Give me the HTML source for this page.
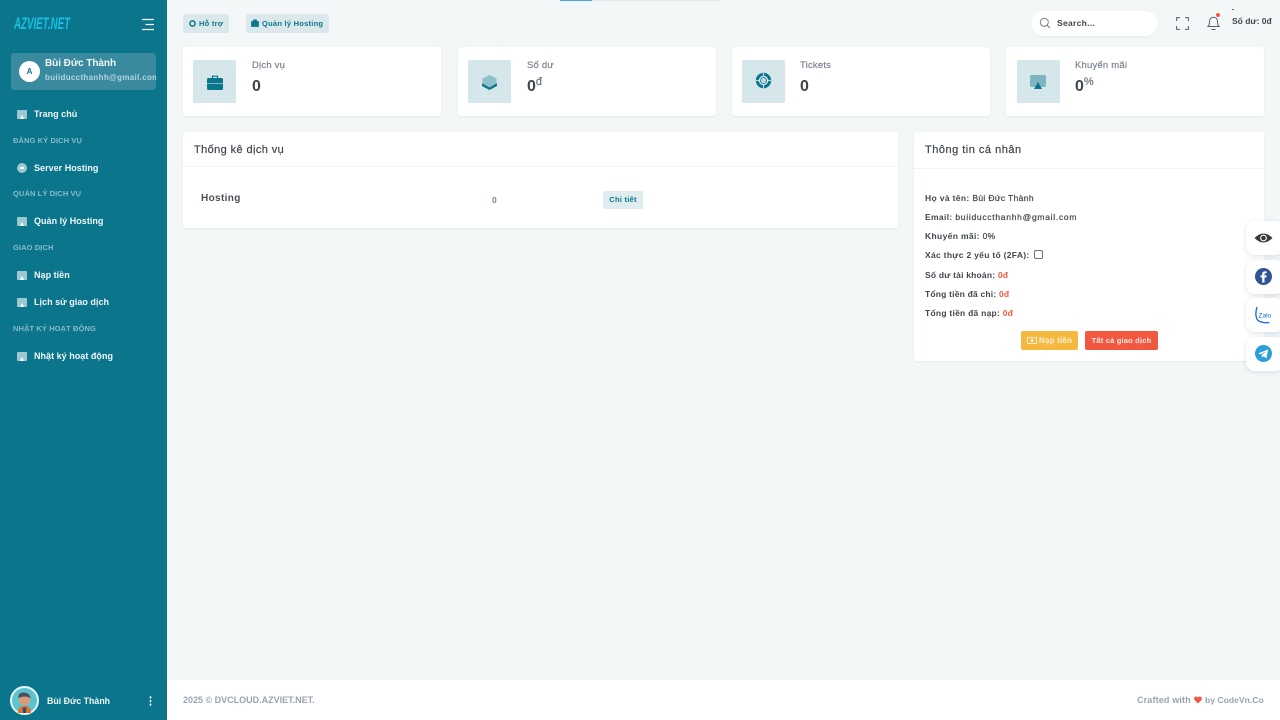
<!DOCTYPE html>
<html lang="vi"><head><meta charset="utf-8"><title>AZVIET.NET</title>
<style>
*{box-sizing:border-box}
html,body{margin:0;padding:0;width:1280px;height:720px;overflow:hidden;background:#f3f7f8;font-family:"Liberation Sans",sans-serif;color:#41464d}
.a{position:absolute;white-space:nowrap}
.b{font-weight:700}
#side{position:absolute;left:0;top:0;width:167px;height:720px;background:#0b758c;color:#fff}
.nav{position:absolute;left:34px;font-size:9px;font-weight:700;color:#f0f7f9;white-space:nowrap;letter-spacing:.03px;line-height:12px}
.sec{position:absolute;left:13px;font-size:7.5px;font-weight:700;color:#86bcc9;white-space:nowrap;letter-spacing:.1px;line-height:10px}
.ic{position:absolute;left:17px;width:10px;height:9px;background:#9cc8d2;border-radius:1px}
.ic:after{content:"";position:absolute;left:2.5px;bottom:0;border-left:2.5px solid transparent;border-right:2.5px solid transparent;border-bottom:4px solid #fff}
.card{position:absolute;background:#fff;border-radius:3px;box-shadow:0 1px 2px rgba(150,170,180,.15)}
.stat{top:47px;height:69px}
.sq{position:absolute;top:60px;width:43px;height:43px;background:#d6e7eb;border-radius:2px}
.lbl{position:absolute;top:60px;font-size:9.5px;color:#7c8390;white-space:nowrap;letter-spacing:.2px;line-height:12px;-webkit-text-stroke:.2px #7c8390}
.val{position:absolute;top:78px;font-size:16px;font-weight:700;color:#41464d;white-space:nowrap;line-height:18px}
.val sup{font-size:11px;font-weight:400;color:#6b7280;line-height:0;vertical-align:6px;margin-left:0;-webkit-text-stroke:.2px #6b7280}
.row{position:absolute;left:925px;font-size:8.5px;font-weight:700;color:#41464d;white-space:nowrap;letter-spacing:.2px;line-height:11px}
.row span{font-weight:400;color:#41464d;-webkit-text-stroke:.2px #41464d;letter-spacing:.35px}
.row i{font-style:normal;color:#f1583f}
.fl{position:absolute;left:1246px;width:38px;height:34px;background:#fff;border-radius:9px;box-shadow:0 1px 5px rgba(120,140,150,.25)}
.tag{position:absolute;top:14px;height:19px;background:#dbe8eb;border-radius:2px;font-size:7.5px;font-weight:700;color:#0b758c;line-height:19px;white-space:nowrap;letter-spacing:.25px}
</style></head><body>

<div class="a" style="left:560px;top:0;width:160px;height:1px;background:#e3e9ec"></div>
<div class="a" style="left:560px;top:0;width:32px;height:1px;background:#4aa3ee"></div>

<div id="side">
 <div class="a b" style="left:14px;top:15px;font-size:16.5px;line-height:18px;font-style:italic;color:#19bfe0;transform:scaleX(.59);transform-origin:0 0">AZVIET.NET</div>
 <svg class="a" style="left:141px;top:18px" width="14" height="13" viewBox="0 0 14 13"><path d="M1 1.5H13M4.5 6.5H13M1 11.5H13" stroke="#fff" stroke-width="1.2"/></svg>
 <div class="a" style="left:11px;top:53px;width:145px;height:37px;background:#39899f;border-radius:3px;overflow:hidden">
  <div class="a" style="left:8px;top:8px;width:21px;height:21px;border-radius:50%;background:#fff;color:#0b758c;font-size:8px;font-weight:700;text-align:center;line-height:21px">A</div>
  <div class="a b" style="left:34px;top:5px;font-size:10px;line-height:12px;color:#f0f7f9;letter-spacing:-.05px">Bùi Đức Thành</div>
  <div class="a b" style="left:34px;top:20px;font-size:8px;line-height:10px;color:#b4d6de;letter-spacing:.32px">buiiduccthanhh@gmail.com</div>
 </div>

 <div class="ic" style="top:110px"></div><div class="nav" style="top:108px">Trang chủ</div>
 <div class="sec" style="top:136px">ĐĂNG KÝ DỊCH VỤ</div>
 <div class="a" style="left:17px;top:163px;width:10px;height:10px;border-radius:50%;background:#9cc8d2"><div class="a" style="left:3px;top:4px;width:4px;height:2px;background:#fff"></div></div><div class="nav" style="top:162px">Server Hosting</div>
 <div class="sec" style="top:189px">QUẢN LÝ DỊCH VỤ</div>
 <div class="ic" style="top:217px"></div><div class="nav" style="top:215px">Quản lý Hosting</div>
 <div class="sec" style="top:243px">GIAO DỊCH</div>
 <div class="ic" style="top:271px"></div><div class="nav" style="top:269px">Nạp tiền</div>
 <div class="ic" style="top:298px"></div><div class="nav" style="top:296px">Lịch sử giao dịch</div>
 <div class="sec" style="top:324px">NHẬT KÝ HOẠT ĐỘNG</div>
 <div class="ic" style="top:352px"></div><div class="nav" style="top:350px">Nhật ký hoạt động</div>

 <svg class="a" style="left:10px;top:686px" width="29" height="29" viewBox="0 0 29 29">
  <circle cx="14.5" cy="14.5" r="13.5" fill="#5cc3cf" stroke="#e8f4f6" stroke-width="2"/>
  <path d="M8 27Q8 20 14.5 20T21 27Z" fill="#e0702c"/>
  <circle cx="14.5" cy="14" r="5.5" fill="#dc9b78"/>
  <path d="M8.5 12Q8 6 14 6.5T20.5 12Q15 9 8.5 12Z" fill="#4a4f5c"/>
  <path d="M12.8 21.500h3.400V27h-3.400Z" fill="#33506b"/>
 </svg>
 <div class="a b" style="left:47px;top:695px;font-size:8.8px;line-height:12px;color:#f0f7f9">Bùi Đức Thành</div>
 <svg class="a" style="left:149px;top:696px" width="3" height="10" viewBox="0 0 3 10"><path d="M1.500 1v.8M1.500 4.600v.8M1.500 8.200v.8" stroke="#fff" stroke-width="1.700" stroke-linecap="round"/></svg>
</div>

<div class="tag" style="left:183px;width:46px;padding-left:16px">Hỗ trợ</div>
<svg class="a" style="left:189px;top:20px" width="7" height="7" viewBox="0 0 7 7"><circle cx="3.500" cy="3.500" r="2.600" fill="none" stroke="#0b758c" stroke-width="1.500"/></svg>
<div class="tag" style="left:246px;width:83px;padding-left:16px">Quản lý Hosting</div>
<svg class="a" style="left:251px;top:19px" width="8" height="8" viewBox="0 0 8 8"><path d="M.5 2.500h7v5h-7ZM2.500 2.500V.8h3v1.700" fill="#0b758c" stroke="#0b758c" stroke-width=".7"/></svg>

<div class="a" style="left:1031px;top:11px;width:127px;height:25px;background:#fff;border-radius:13px;box-shadow:0 1px 2px rgba(150,170,180,.15)"></div>
<svg class="a" style="left:1039px;top:17px" width="12" height="12" viewBox="0 0 12 12"><circle cx="5.300" cy="5.300" r="4" fill="none" stroke="#6f7780" stroke-width=".9"/><path d="M8.300 8.300L11 11" stroke="#6f7780" stroke-width=".9"/></svg>
<div class="a b" style="left:1057px;top:17px;font-size:8.5px;line-height:12px;color:#41464d;letter-spacing:.3px">Search...</div>
<svg class="a" style="left:1176px;top:17px" width="13" height="13" viewBox="0 0 13 13"><path d="M.6 4V.6H4M9 .6h3.400V4M12.400 9v3.400H9M4 12.400H.6V9" fill="none" stroke="#555c64" stroke-width="1"/></svg>
<svg class="a" style="left:1206px;top:14px" width="15" height="17" viewBox="0 0 15 17"><path d="M2 12.500h11c-1.500-1.500-1.500-3-1.500-5C11.500 5 10 3.200 7.500 3.200S3.500 5 3.500 7.500c0 2 0 3.500-1.500 5ZM5.500 15.500h4" fill="none" stroke="#555c64" stroke-width="1"/></svg>
<div class="a" style="left:1216px;top:13px;width:4px;height:4px;border-radius:50%;background:#f1583f"></div>
<div class="a" style="left:1232px;top:9px;width:2px;height:1px;background:#666"></div>
<div class="a b" style="left:1232px;top:15px;font-size:8.5px;line-height:12px;color:#41464d">Số dư: 0đ</div>

<div class="card stat" style="left:183px;width:258px"></div>
<div class="sq" style="left:193px"></div>
<svg class="a" style="left:207px;top:75px" width="16" height="15" viewBox="0 0 16 15"><path d="M5.500 3V1.200h5V3" fill="none" stroke="#0b758c" stroke-width="1.200"/><rect y="3" width="16" height="12" rx="1.500" fill="#0b758c"/><rect y="8" width="16" height="1" fill="#7fb8c5"/></svg>
<div class="lbl" style="left:252px">Dịch vụ</div><div class="val" style="left:252px">0</div>

<div class="card stat" style="left:458px;width:258px"></div>
<div class="sq" style="left:468px"></div>
<svg class="a" style="left:481px;top:74px" width="17" height="17" viewBox="0 0 17 17"><path d="M1 9.500v2.500l7.500 4 7.500-4V9.500Z" fill="#0b758c"/><path d="M8.500 1L15.500 4.500v5L8.500 13.500 1.500 9.500v-5Z" fill="#8fc0cc"/></svg>
<div class="lbl" style="left:527px">Số dư</div><div class="val" style="left:527px">0<sup>đ</sup></div>

<div class="card stat" style="left:732px;width:258px"></div>
<div class="sq" style="left:742px"></div>
<svg class="a" style="left:755px;top:72px" width="17" height="17" viewBox="0 0 17 17"><circle cx="8.500" cy="8.500" r="6.200" fill="none" stroke="#0b758c" stroke-width="3"/><circle cx="8.500" cy="8.500" r="3" fill="#bcd9e0" stroke="#0b758c" stroke-width=".8"/><path d="M8.500 1v3M8.500 13v3M1 8.500h3M13 8.500h3" stroke="#bcd9e0" stroke-width="1.200"/></svg>
<div class="lbl" style="left:800px">Tickets</div><div class="val" style="left:800px">0</div>

<div class="card stat" style="left:1006px;width:258px"></div>
<div class="sq" style="left:1017px"></div>
<svg class="a" style="left:1030px;top:75px" width="16" height="15" viewBox="0 0 16 15"><path d="M1.500 0h13A1.500 1.500 0 0 1 16 1.500v9A1.500 1.500 0 0 1 14.500 12h-13A1.500 1.500 0 0 1 0 10.500v-9A1.500 1.500 0 0 1 1.500 0Z" fill="#7db6c3"/><path d="M8 7l4 7H4Z" fill="#0b758c"/></svg>
<div class="lbl" style="left:1075px">Khuyến mãi</div><div class="val" style="left:1075px">0<sup>%</sup></div>

<div class="card" style="left:183px;top:132px;width:715px;height:96px"></div>
<div class="a" style="left:183px;top:166px;width:715px;height:1px;background:#f1f4f6"></div>
<div class="a" style="left:194px;top:143px;font-size:11px;line-height:14px;color:#41464d;letter-spacing:.4px;-webkit-text-stroke:.2px #41464d">Thống kê dịch vụ</div>
<div class="a b" style="left:201px;top:192px;font-size:10px;line-height:13px;color:#4b5057;letter-spacing:.35px">Hosting</div>
<div class="a b" style="left:492px;top:195px;font-size:8.5px;line-height:11px;color:#7c8390">0</div>
<div class="a b" style="left:603px;top:191px;width:40px;height:18px;background:#e0ecef;border-radius:2px;font-size:7.5px;line-height:18px;color:#0b758c;text-align:center;letter-spacing:.25px">Chi tiết</div>

<div class="card" style="left:914px;top:132px;width:350px;height:229px"></div>
<div class="a" style="left:914px;top:168px;width:350px;height:1px;background:#f1f4f6"></div>
<div class="a" style="left:925px;top:143px;font-size:11px;line-height:14px;color:#41464d;letter-spacing:.5px;-webkit-text-stroke:.2px #41464d">Thông tin cá nhân</div>
<div class="row" style="top:193px;letter-spacing:.35px">Họ và tên: <span>Bùi Đức Thành</span></div>
<div class="row" style="top:212px;letter-spacing:.35px">Email: <span style="letter-spacing:.72px">buiiduccthanhh@gmail.com</span></div>
<div class="row" style="top:231px;letter-spacing:.35px">Khuyến mãi: <span>0%</span></div>
<div class="row" style="top:250px;letter-spacing:.3px">Xác thực 2 yếu tố (2FA):</div>
<div class="a" style="left:1034px;top:250px;width:9px;height:9px;background:#fff;border:1px solid #6f6f6f;border-radius:2px"></div>
<div class="row" style="top:270px">Số dư tài khoản: <i>0đ</i></div>
<div class="row" style="top:289px">Tổng tiền đã chi: <i>0đ</i></div>
<div class="row" style="top:308px;letter-spacing:.25px">Tổng tiền đã nạp: <i>0đ</i></div>
<div class="a b" style="left:1021px;top:331px;width:57px;height:19px;background:#f5b93f;border-radius:2px;font-size:8px;line-height:19px;color:#fdf0d2;padding-left:18px;letter-spacing:.2px">Nạp tiền</div>
<svg class="a" style="left:1027px;top:337px" width="10" height="7" viewBox="0 0 10 7"><rect x=".5" y=".5" width="9" height="6" fill="none" stroke="#fdf0d2"/><circle cx="5" cy="3.500" r="1.500" fill="#fdf0d2"/></svg>
<div class="a b" style="left:1085px;top:331px;width:73px;height:19px;background:#f1583f;border-radius:2px;font-size:7.6px;line-height:19px;color:#fde8e3;text-align:center;letter-spacing:.15px">Tất cả giao dịch</div>

<div class="fl" style="top:221px"></div>
<svg class="a" style="left:1254px;top:232px" width="19" height="12" viewBox="0 0 19 12"><path d="M.5 6Q9.500-3 18.500 6 9.500 15 .5 6Z" fill="#3a3a3a"/><circle cx="9.500" cy="6" r="3.400" fill="#fff"/><circle cx="9.500" cy="6" r="2.300" fill="#3a3a3a"/></svg>
<div class="fl" style="top:260px"></div>
<svg class="a" style="left:1255px;top:268px" width="17" height="17" viewBox="0 0 17 17"><circle cx="8.500" cy="8.500" r="8.500" fill="#2f5596"/><path d="M9.500 14.500V9.500h1.800l.3-2.100H9.500V6.200c0-.7.3-1 1-1h1.100V3.400H10c-2 0-2.800 1.100-2.800 2.700v1.300H5.600v2.100h1.600v5Z" fill="#fff"/></svg>
<div class="fl" style="top:298px"></div>
<svg class="a" style="left:1254px;top:306px" width="20" height="19" viewBox="0 0 20 19"><path d="M3 1Q.5 9 3.500 14q4 3.500 12 2.500" fill="none" stroke="#1668e0" stroke-width="1.300"/><text x="4.500" y="11.500" font-family="Liberation Sans, sans-serif" font-size="6.500" fill="#1668e0">Zalo</text></svg>
<div class="fl" style="top:337px"></div>
<svg class="a" style="left:1255px;top:345px" width="17" height="17" viewBox="0 0 17 17"><circle cx="8.500" cy="8.500" r="8.500" fill="#2a9fd8"/><path d="M3.300 8.400l9.800-4-1.600 9-3-2.200-1.500 1.500-.3-2.600 4.500-4-5.700 3.400Z" fill="#fff"/></svg>

<div class="a" style="left:167px;top:680px;width:1113px;height:40px;background:#fff"></div>
<div class="a b" style="left:183px;top:694px;font-size:9px;line-height:12px;color:#9aa2b1;letter-spacing:0">2025 © DVCLOUD.AZVIET.NET.</div>
<div class="a b" style="left:1137px;top:694px;font-size:9px;line-height:12px;color:#9aa2b1;letter-spacing:.15px">Crafted with</div>
<svg class="a" style="left:1194px;top:696px" width="8" height="8" viewBox="0 0 8 8"><path d="M4 7.500L.7 4.200C-.7 2.500.6.500 2.200.500 3 .500 3.600 1 4 1.600 4.400 1 5 .500 5.800.500 7.400.500 8.700 2.500 7.300 4.200Z" fill="#f1583f"/></svg>
<div class="a b" style="left:1205px;top:694px;font-size:8.6px;line-height:12px;color:#9aa2b1">by CodeVn.Co</div>
</body></html>
